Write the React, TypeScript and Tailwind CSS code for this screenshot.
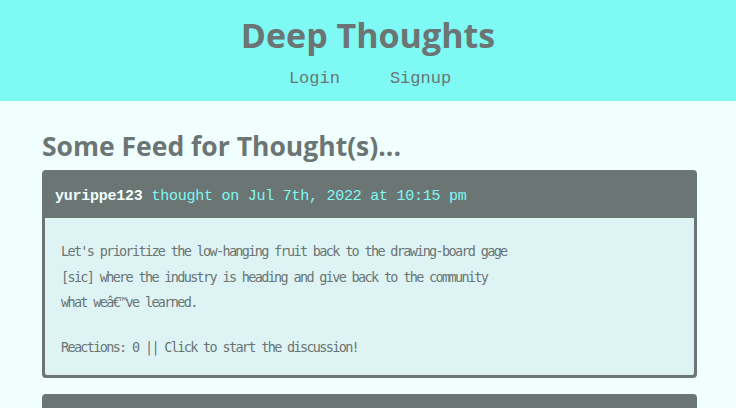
import React from "react";

const mono = "font-['Liberation_Mono','DejaVu_Sans_Mono',monospace]";
const bodyMono = "font-['DejaVu_Sans_Mono','Liberation_Mono',monospace]";
const sans = "font-['Open_Sans','Lato',sans-serif]";

function Card({ user, date, text, reactions }: { user: string; date: string; text: string; reactions: number }) {
  return (
    <div className="rounded-[4px] border-[3px] border-[#6b7574] bg-[#6b7574]">
      <div className={`${mono} flex h-[45px] items-center px-[10px] pt-[3px] text-[15px] tracking-[-0.25px]`}>
        <span className="font-bold text-[#f0fffe]">{user}</span>
        <span className="ml-[9px] text-[#7ef9f3]">thought on {date}</span>
      </div>
      <div className={`${bodyMono} flex flex-col gap-[19px] rounded-b-[2px] bg-[#def4f4] px-4 pb-[15px] pt-[21px] text-[13.5px] leading-[25.6px] tracking-[-1.67px] text-[#6b7574]`}>
        <p className="max-w-[454px]">{text}</p>
        <p>Reactions: {reactions} || Click to start the discussion!</p>
      </div>
    </div>
  );
}

export default function App() {
  return (
    <div className="min-h-[408px] bg-[#f0fffe]">
      <header className="flex h-[101px] flex-col items-center bg-[#7ef9f3] pt-[13px]">
        <h1 className={`${sans} text-[34px] font-bold leading-[44px] text-[#6b7574]`}>Deep Thoughts</h1>
        <nav className={`${mono} mt-[10px] flex gap-[50px] pl-[4px] text-[17px] leading-[24px] text-[#6b7574]`}>
          <a>Login</a>
          <a>Signup</a>
        </nav>
      </header>
      <main className="pl-[42px] pr-[39px] pt-[28px]">
        <h2 className={`${sans} mb-[7px] text-[26.5px] font-bold leading-[34px] text-[#6b7574]`}>Some Feed for Thought(s)...</h2>
        <div className="flex flex-col gap-[16px]">
          <Card
            user="yurippe123"
            date="Jul 7th, 2022 at 10:15 pm"
            text="Let's prioritize the low-hanging fruit back to the drawing-board gage [sic] where the industry is heading and give back to the community what weâ€™ve learned."
            reactions={0}
          />
          <Card user="someone" date="Jul 7th, 2022 at 10:00 pm" text="More thoughts." reactions={0} />
        </div>
      </main>
    </div>
  );
}
